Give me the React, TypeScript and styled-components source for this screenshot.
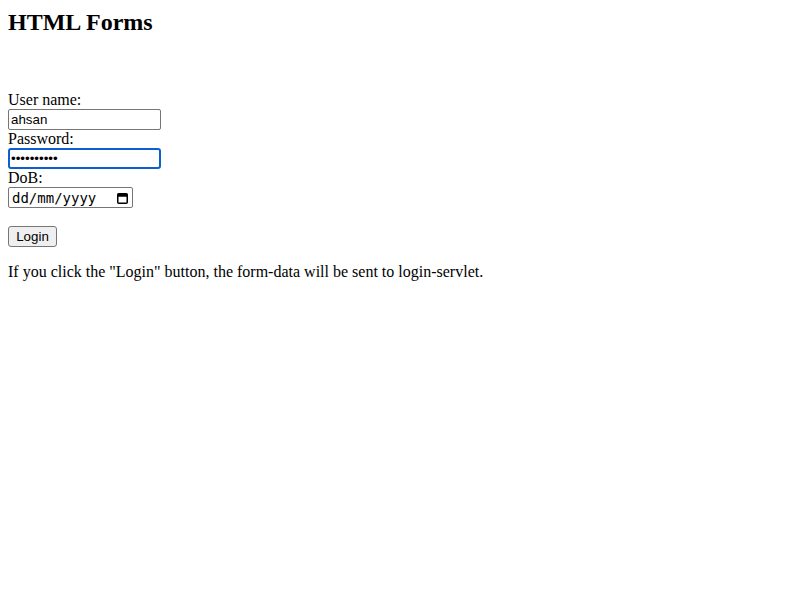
import React from 'react';
import styled, { createGlobalStyle } from 'styled-components';

const GlobalStyle = createGlobalStyle`
  body {
    margin: 8px;
    font-family: "Liberation Serif", "Times New Roman", serif;
    font-size: 16px;
    color: #000;
    background: #fff;
  }
`;

const Title = styled.h2`
  margin: 0 0 55px;
  font-size: 24px;
  line-height: 28px;
  font-weight: bold;
`;

const Form = styled.form`
  display: flex;
  flex-direction: column;
  align-items: flex-start;
`;

const Label = styled.label`
  display: block;
  line-height: 18px;
  height: 18px;
`;

const TextInput = styled.input<{ $focused?: boolean }>`
  box-sizing: border-box;
  width: 153px;
  height: 21px;
  margin: 0;
  padding: 1px 2px;
  font-family: "Liberation Sans", Arial, sans-serif;
  font-size: 13.33px;
  color: #000;
  background: #fff;
  border: ${(p) => (p.$focused ? '2px solid #0b5fd0' : '1px solid #767676')};
  border-radius: ${(p) => (p.$focused ? '3px' : '2px')};
  padding-left: ${(p) => (p.$focused ? '1px' : '2px')};
  outline: none;
  caret-color: #000;
`;

const DateBox = styled.div`
  box-sizing: border-box;
  width: 125px;
  height: 21px;
  display: flex;
  align-items: center;
  justify-content: space-between;
  padding: 0 4px 0 3px;
  border: 1px solid #767676;
  border-radius: 2px;
  font-family: "DejaVu Sans Mono", "Liberation Mono", monospace;
  font-size: 14px;
  color: #000;
`;

const DateText = styled.span`
  letter-spacing: 0;
`;

const Spacer = styled.div`
  height: 18px;
`;

const Button = styled.button`
  box-sizing: border-box;
  width: 49px;
  height: 21px;
  padding: 0;
  font-family: "Liberation Sans", Arial, sans-serif;
  font-size: 13.33px;
  color: #000;
  background: #efefef;
  border: 1px solid #767676;
  border-radius: 3px;
`;

const Note = styled.p`
  margin: 16px 0;
  line-height: 18px;
`;

const CalendarIcon: React.FC = () => (
  <svg width="11" height="12" viewBox="0 0 11 12">
    <rect x="0.75" y="1.75" width="9.5" height="9.5" rx="1" fill="none" stroke="#000" strokeWidth="1.5" />
    <rect x="0.75" y="1.75" width="9.5" height="3" fill="#000" />
  </svg>
);

const App: React.FC = () => {
  return (
    <>
      <GlobalStyle />
      <Title>HTML Forms</Title>
      <Form onSubmit={(e) => e.preventDefault()}>
        <Label htmlFor="uname">User name:</Label>
        <TextInput id="uname" type="text" defaultValue="ahsan" />
        <Label htmlFor="pwd">Password:</Label>
        <TextInput id="pwd" type="password" defaultValue="ahsan12345" $focused autoFocus />
        <Label htmlFor="dob">DoB:</Label>
        <DateBox id="dob">
          <DateText>dd/mm/yyyy</DateText>
          <CalendarIcon />
        </DateBox>
        <Spacer />
        <Button type="submit">Login</Button>
      </Form>
      <Note>If you click the "Login" button, the form-data will be sent to login-servlet.</Note>
    </>
  );
};

export default App;
